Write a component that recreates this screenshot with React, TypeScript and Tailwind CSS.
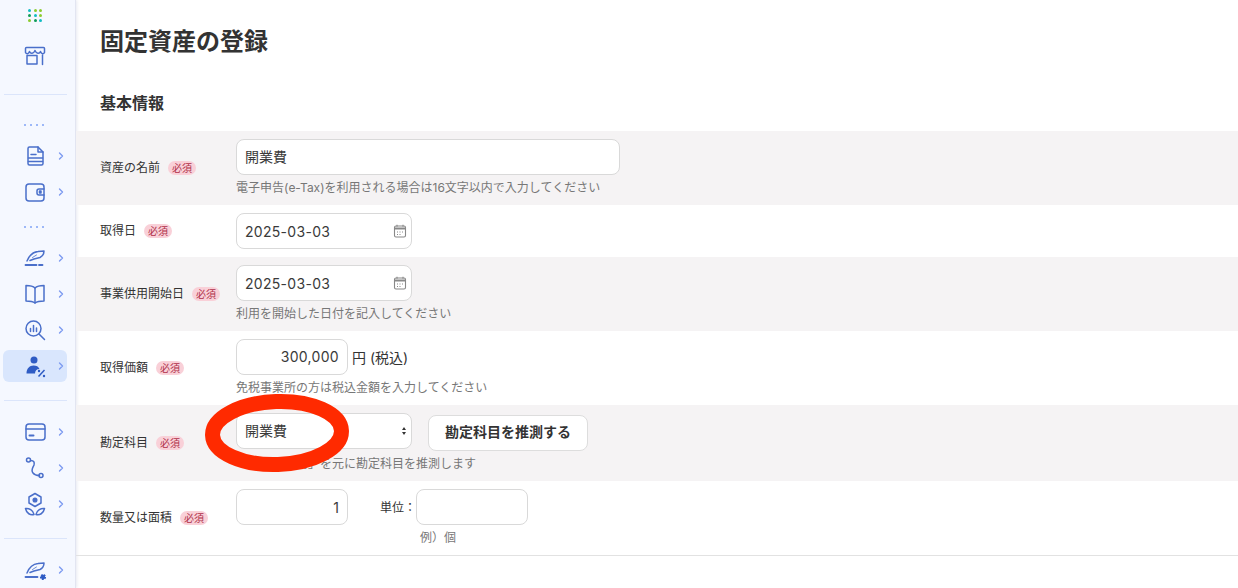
import type { ReactNode } from 'react';

const Svg = ({ children }: { children: ReactNode }) => (
  <svg width="24" height="24" viewBox="0 0 24 24" fill="none" stroke="#4a6fca" strokeWidth="1.5" strokeLinecap="round" strokeLinejoin="round">
    {children}
  </svg>
);

const StoreIcon = () => (
  <Svg>
    <path d="M3.500 3.500h17a1 1 0 0 1 1 1v4c-1 2-3 1.500-4-1c-1 2.500-4 2.500-5.500-1c-1.500 3.500-4.500 3.500-5.500 1c-1 2.500-3 3-4 1v-4a1 1 0 0 1 1-1z" />
    <path d="M4 11.500v8.500h10v-8.500h-10M19.500 11v9.500" />
  </Svg>
);
const DocIcon = () => (
  <Svg>
    <path d="M5 4.500A1.500 1.500 0 0 1 6.500 3H15l5 5v11.500a1.500 1.500 0 0 1-1.500 1.500h-12A1.500 1.500 0 0 1 5 19.500z" />
    <path d="M15 3v5h5M8 10.500h5M5.500 14h14M5.500 17.500h14" />
  </Svg>
);
const WalletIcon = () => (
  <Svg>
    <rect x="3" y="4" width="18" height="17" rx="3" />
    <path d="M21 9h-5a2 2 0 0 0-2 2v2a2 2 0 0 0 2 2h5" />
    <rect x="16.500" y="11" width="1.500" height="2" fill="#4a6fca" />
  </Svg>
);
const QuillIcon = () => (
  <>
    <path d="M4 15C6 10 10 6 15 5.500c2-.3 4-.5 6-.5c0 2-1 5-4 6.500l-6 1.500l-4 1.500" />
    <path d="M9.500 11.500l4-2.500" strokeWidth=".8" />
  </>
);
const QuillLineIcon = () => (
  <Svg>
    <QuillIcon />
    <path d="M2.500 19h11M16 19h3.500" strokeWidth="1.800" />
  </Svg>
);
const BookIcon = () => (
  <Svg>
    <path d="M12 6c-2-2-5-2.500-9-2.500v15.500c4 0 7 .5 9 2c2-1.500 5-2 9-2V3.500c-4 0-7 .5-9 2.500z" />
    <path d="M12 6v15" />
  </Svg>
);
const SearchChartIcon = () => (
  <Svg>
    <circle cx="10.500" cy="10.500" r="7.500" />
    <path d="M16 16l5.500 5.500M7.500 10.500v3M10.500 7.500v6M13.500 10v3.500" />
  </Svg>
);
const PersonPercentIcon = () => (
  <svg width="24" height="24" viewBox="0 0 24 24" fill="none">
    <circle cx="11" cy="6" r="3.500" fill="#2f5cc4" />
    <path d="M3.500 19.500c0-5 3-8 7-8c3 0 5 1 6 3.500c-3 0-4.500 2-4.500 4.500z" fill="#2f5cc4" />
    <path d="M15.500 22.500l6-6.500" stroke="#2f5cc4" strokeWidth="1.500" />
    <circle cx="16" cy="17" r="1.200" fill="#2f5cc4" />
    <circle cx="21" cy="22" r="1.200" fill="#2f5cc4" />
  </svg>
);
const CardIcon = () => (
  <Svg>
    <rect x="3" y="4" width="19" height="16" rx="3" />
    <path d="M3 9h19" />
    <path d="M6.500 15.500h4" strokeWidth="2" />
  </Svg>
);
const RouteIcon = () => (
  <Svg>
    <circle cx="5.500" cy="4" r="2" />
    <circle cx="18" cy="19.500" r="2" />
    <path d="M7.500 4.500c4 0 4 2 3.500 4.500c-1 2.500-3.500 5-1 8c1.500 2 4 2.500 6.500 2.500" />
  </Svg>
);
const FlowerIcon = () => (
  <Svg>
    <path d="M12 1.500l6 3.500v6l-6 3.500l-6-3.500V5z" />
    <circle cx="12" cy="8" r="1.800" fill="#4a6fca" />
    <path d="M11 22.500c-3.500 1-7.500-1-8.500-6c3.500-.5 7.500 1.500 8.500 6zM13 22.500c3.500 1 7.500-1 8.500-6c-3.500-.5-7.500 1.500-8.500 6z" />
  </Svg>
);
const QuillGearIcon = () => (
  <Svg>
    <QuillIcon />
    <path d="M2.500 19h12" strokeWidth="1.800" />
    <circle cx="20" cy="19" r="2.200" fill="#2f5cc4" stroke="#2f5cc4" strokeWidth="1.800" strokeDasharray="1.600 .9" strokeLinecap="butt" />
  </Svg>
);

const Chevron = () => (
  <svg width="6" height="8" viewBox="0 0 6 8" fill="none" stroke="#7d9bf0" strokeWidth="1.400" strokeLinecap="round" strokeLinejoin="round">
    <path d="M1.500 1l3 3l-3 3" />
  </svg>
);

const Calendar = () => (
  <svg width="14" height="14" viewBox="0 0 14 14" fill="none" stroke="#888888" strokeWidth="1.100" className="shrink-0">
    <rect x="1.500" y="2" width="11" height="11" rx="1.500" />
    <path d="M1.500 4.500h11" strokeWidth="2" />
    <path d="M4 .8v2M10 .8v2" />
    <path d="M4 8h1M6.500 8h1M9 8h1M4 10.500h1M6.500 10.500h1" />
  </svg>
);

function NavItem({ icon, active }: { icon: ReactNode; active?: boolean }) {
  return (
    <div className={active ? 'mx-[3px] w-16 h-8 my-0.5 flex items-center rounded-md pl-5 bg-[#d9e6fd]' : 'mx-[3px] w-16 h-9 flex items-center rounded-md pl-5'}>
      <span className="w-6 h-6 flex shrink-0">{icon}</span>
      <span className="ml-[11px]"><Chevron /></span>
    </div>
  );
}

const Dots = () => (
  <div className="h-3.5 pl-6 flex items-center gap-1">
    <i className="size-[2px] bg-[#9db8f8]" />
    <i className="size-[2px] bg-[#9db8f8]" />
    <i className="size-[2px] bg-[#9db8f8]" />
    <i className="size-[2px] bg-[#9db8f8]" />
  </div>
);

const Rule = ({ className }: { className: string }) => <div className={`mx-1 w-[63px] h-px bg-[#dbe5fb] ${className}`} />;

function Row({ label, gray, children }: { label: string; gray?: boolean; children: ReactNode }) {
  return (
    <div className={`flex items-center pl-6 ${gray ? 'bg-[#f5f3f4]' : ''}`}>
      <div className="w-[136px] shrink-0 flex items-center gap-2 text-xs text-[#333333]">
        <span>{label}</span>
        <span className="h-[14px] px-[4px] rounded-full bg-[#f9d0d8] text-[10px] leading-[14px] text-[#b0304a]">必須</span>
      </div>
      <div className="py-2 flex-1">{children}</div>
    </div>
  );
}

const Hint = ({ children, className = '' }: { children: ReactNode; className?: string }) => (
  <p className={`mt-[3px] h-[19px] text-xs leading-5 text-[#777777] ${className}`}>{children}</p>
);

const boxClass = 'h-9 bg-white border border-[#d9d9d9] rounded-lg flex items-center px-2 text-sm text-[#3a3a3a]';

const DateBox = () => (
  <div className={`${boxClass} w-[176px] justify-between pr-[4px]`}>
    <span className="pt-[2px] tracking-[0.3px]">2025-03-03</span>
    <Calendar />
  </div>
);

export default function App() {
  return (
    <div className="relative h-[588px] w-[1238px] overflow-hidden bg-white flex font-['Inter','Noto_Sans_CJK_JP',sans-serif]">
      {/* Sidebar */}
      <aside className="w-[76px] shrink-0 h-full bg-[#f5f8ff] border-r border-[#e2e5f1] shadow-[1px_0_3px_rgba(60,70,130,0.12)]">
        <div className="pt-[9px] pl-[28px] grid grid-cols-3 w-[43px] gap-[2px]">
          {['#12bcc4', '#8ccb2f', '#8ccb2f', '#0f9d58', '#12bcc4', '#8ccb2f', '#8ccb2f', '#0f9d58', '#12bcc4'].map((c, i) => (
            <svg key={i} width="3" height="3" viewBox="0 0 3 3" className="block"><circle cx="1.500" cy="1.500" r="1.500" fill={c} /></svg>
          ))}
        </div>
        <div className="mt-[22px] pl-[23px] h-6"><StoreIcon /></div>
        <Rule className="mt-[26px]" />
        <div className="mt-[23px]"><Dots /></div>
        <div className="mt-[6px]">
          <NavItem icon={<DocIcon />} />
          <NavItem icon={<WalletIcon />} />
        </div>
        <div className="mt-[10px]"><Dots /></div>
        <div className="mt-[6px]">
          <NavItem icon={<QuillLineIcon />} />
          <NavItem icon={<BookIcon />} />
          <NavItem icon={<SearchChartIcon />} />
          <NavItem icon={<PersonPercentIcon />} active />
        </div>
        <Rule className="mt-[18px]" />
        <div className="mt-[13px]">
          <NavItem icon={<CardIcon />} />
          <NavItem icon={<RouteIcon />} />
          <NavItem icon={<FlowerIcon />} />
        </div>
        <Rule className="mt-[16px]" />
        <div className="mt-[13px]">
          <NavItem icon={<QuillGearIcon />} />
        </div>
      </aside>

      {/* Main */}
      <main className="flex-1 min-w-0">
        <h1 className="pl-6 pt-[24px] h-[92px] text-2xl leading-9 font-bold text-[#333333]">固定資産の登録</h1>
        <h2 className="pl-6 h-[39px] text-base leading-[22px] font-bold text-[#333333]">基本情報</h2>

        <div className="border-b border-[#e2e2e2]">
          <Row label="資産の名前" gray>
            <div className={`${boxClass} w-[384px]`}>開業費</div>
            <Hint>電子申告(e-Tax)を利用される場合は16文字以内で入力してください</Hint>
          </Row>
          <Row label="取得日">
            <DateBox />
          </Row>
          <Row label="事業供用開始日" gray>
            <DateBox />
            <Hint>利用を開始した日付を記入してください</Hint>
          </Row>
          <Row label="取得価額">
            <div className="flex items-center gap-1 text-sm text-[#333333]">
              <div className={`${boxClass} w-28 justify-end tracking-[0.3px]`}>300,000</div>
              <span className="pt-px">円 (税込)</span>
            </div>
            <Hint>免税事業所の方は税込金額を入力してください</Hint>
          </Row>
          <Row label="勘定科目" gray>
            <div className="flex h-[38px]">
              <div className={`${boxClass} w-[176px] justify-between pr-[4px]`}>
                <span>開業費</span>
                <svg width="6" height="10" viewBox="0 0 6 10" fill="#333333"><path d="M3 1l2 3H1zM3 9L1 6h4z" /></svg>
              </div>
              <button className="ml-4 mt-0.5 h-9 w-40 pb-0.5 bg-white border border-[#dddddd] rounded-lg text-sm font-bold text-[#333333]">
                勘定科目を推測する
              </button>
            </div>
            <Hint>「資産の名前」を元に勘定科目を推測します</Hint>
          </Row>
          <Row label="数量又は面積">
            <div className="flex items-center">
              <div className={`${boxClass} w-28 justify-end pt-px`}>1</div>
              <span className="ml-8 w-9 pt-px text-xs text-[#333333] whitespace-nowrap">単位：</span>
              <div className={`${boxClass} w-28`} />
            </div>
            <Hint className="pl-[184px]">例）個</Hint>
          </Row>
        </div>
      </main>

      {/* Red marker circled over the select */}
      <svg width="160" height="90" viewBox="0 0 160 90" fill="none" className="absolute left-[198px] top-[388px]">
        <ellipse cx="79" cy="45" rx="64.500" ry="31.500" stroke="#ff2a00" strokeWidth="15" transform="rotate(-2 79 45)" />
      </svg>
    </div>
  );
}
